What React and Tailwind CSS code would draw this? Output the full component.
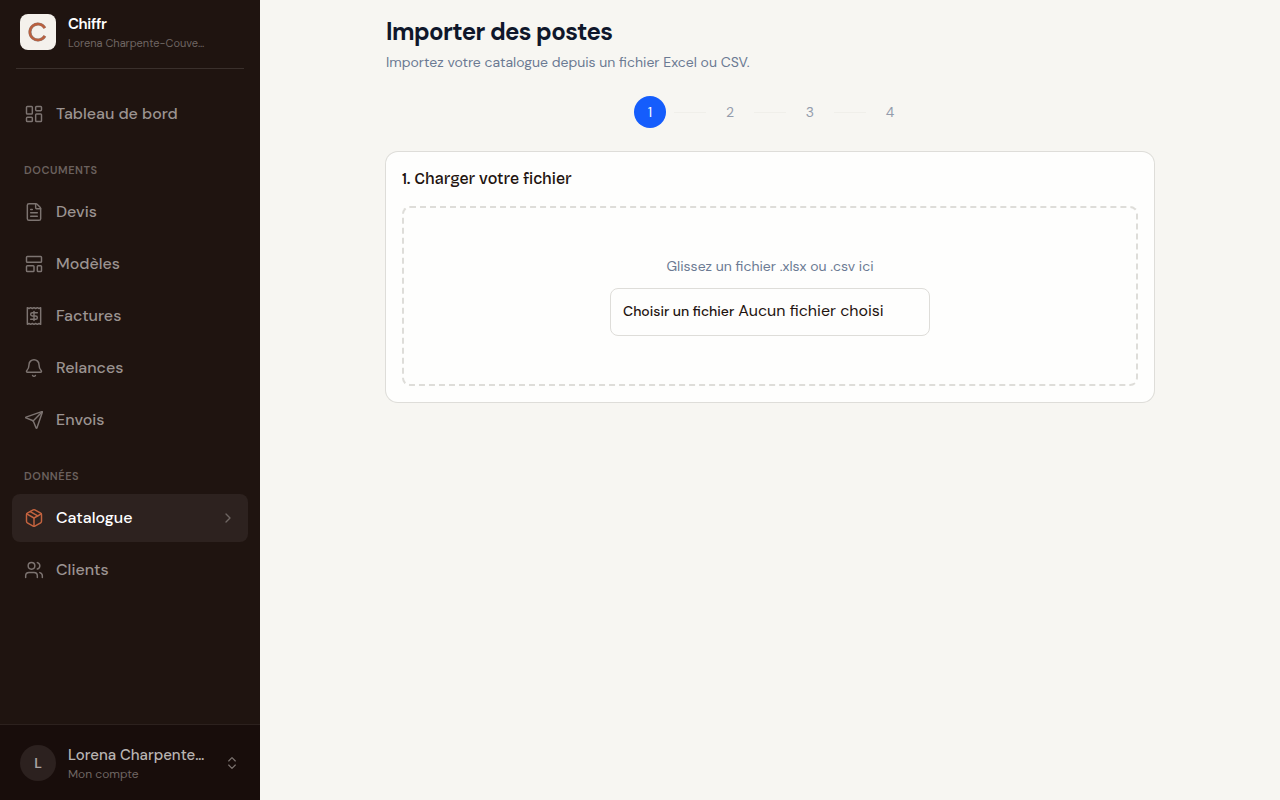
import {
    Bell,
    ChevronRight,
    ChevronsUpDown,
    FileText,
    LayoutDashboard,
    LayoutTemplate,
    Package,
    Receipt,
    Send,
    Users,
} from 'lucide-react';

const documents = [
    { label: 'Devis', icon: FileText },
    { label: 'Modèles', icon: LayoutTemplate },
    { label: 'Factures', icon: Receipt },
    { label: 'Relances', icon: Bell },
    { label: 'Envois', icon: Send },
];

const data = [
    { label: 'Catalogue', icon: Package, active: true },
    { label: 'Clients', icon: Users },
];

function NavItem({ label, icon: Icon, active }) {
    return (
        <a
            href="#"
            aria-current={active ? 'page' : undefined}
            className={
                active
                    ? 'flex h-12 items-center gap-3 rounded-lg bg-[#2d221f] px-3 text-base font-medium text-white'
                    : 'flex h-12 items-center gap-3 rounded-lg px-3 text-base font-medium text-[#9b9391]'
            }
        >
            <Icon size={20} strokeWidth={1.75} className={active ? 'text-[#c4633f]' : 'text-[#7d7471]'} />
            <span className="flex-1">{label}</span>
            {active && <ChevronRight size={16} strokeWidth={2} className="text-[#6f6663]" />}
        </a>
    );
}

function NavGroup({ title, items }) {
    return (
        <div className="mt-6">
            <h2 className="mb-2.5 px-3 text-[11px] leading-4 font-semibold tracking-wider text-[#6b615e] uppercase">{title}</h2>
            <div className="flex flex-col gap-1">
                {items.map((item) => (
                    <NavItem key={item.label} {...item} />
                ))}
            </div>
        </div>
    );
}

function Sidebar() {
    return (
        <aside className="flex w-[260px] shrink-0 flex-col bg-[#1f1410]">
            <div className="mx-4 flex items-start gap-3 border-b border-[#3a302c] px-1 pt-3.5 pb-4">
                <div className="flex size-9 shrink-0 items-center justify-center rounded-lg bg-[#f4f1ec]">
                    <svg viewBox="0 0 20 20" className="size-5" fill="none" aria-hidden="true">
                        <path d="M16.9 6A8 8 0 1 0 16.9 14" stroke="#8d8582" strokeWidth="3" />
                        <path d="M16.8 6.1A8 8 0 1 0 16.8 13.9" stroke="#b9603f" strokeWidth="2.3" />
                    </svg>
                </div>
                <div>
                    <div className="text-[15px] leading-5 font-semibold tracking-tight text-white">Chiffr</div>
                    <div className="text-[11px] leading-[18px] text-[#6f6663]">Lorena Charpente-Couve…</div>
                </div>
            </div>

            <nav className="flex-1 px-3 pt-[21px]">
                <NavItem label="Tableau de bord" icon={LayoutDashboard} />
                <NavGroup title="Documents" items={documents} />
                <NavGroup title="Données" items={data} />
            </nav>

            <button type="button" className="flex items-start gap-3 border-t border-[#2c211e] bg-[#180d0b] px-5 pt-5 pb-[17px] text-left">
                <span className="flex size-9 shrink-0 items-center justify-center rounded-full bg-[#2c211f] text-sm font-semibold text-[#aaa3a1]">L</span>
                <span className="flex-1">
                    <span className="block text-[15px] leading-5 font-medium text-[#b9b4b2]">Lorena Charpente…</span>
                    <span className="block text-xs leading-[18px] text-[#6f6663]">Mon compte</span>
                </span>
                <ChevronsUpDown size={16} strokeWidth={1.75} className="mt-2.5 shrink-0 text-[#7d7471]" />
            </button>
        </aside>
    );
}

function Stepper() {
    return (
        <ol className="mt-6 flex items-center justify-center gap-2 text-sm">
            {[1, 2, 3, 4].map((step) => (
                <li key={step} className="flex items-center gap-2">
                    <span
                        className={
                            step === 1
                                ? 'flex size-8 items-center justify-center rounded-full bg-[#155dfc] text-white'
                                : 'flex size-8 items-center justify-center rounded-full text-[#949cac]'
                        }
                    >
                        {step}
                    </span>
                    <span className={step < 4 ? 'h-px w-8 bg-[#f0efea]' : 'hidden'} />
                </li>
            ))}
        </ol>
    );
}

export default function App() {
    return (
        <div className="flex min-h-screen bg-[#f7f6f2] font-['DM_Sans',Inter,sans-serif]">
            <Sidebar />

            <main className="min-w-0 flex-1">
                <div className="mx-auto max-w-3xl pt-4">
                    <h1 className="text-2xl font-bold tracking-tight text-[#0f172b]">Importer des postes</h1>
                    <p className="mt-1 text-sm text-[#6b7a93]">Importez votre catalogue depuis un fichier Excel ou CSV.</p>

                    <Stepper />

                    <section className="mt-6 rounded-xl bg-[#fefefd] p-4 ring-1 ring-[#deddd9]">
                        <h2 className="font-['Bricolage_Grotesque','DM_Sans',sans-serif] text-base leading-[22px] font-medium text-[#1f1410]">
                            1. Charger votre fichier
                        </h2>
                        <div className="mt-4 flex flex-col items-center gap-3 rounded-lg border-2 border-dashed border-[#deddd9] py-12">
                            <p className="text-sm text-[#6b7a93]">Glissez un fichier .xlsx ou .csv ici</p>
                            <label className="relative flex h-12 w-80 cursor-pointer items-baseline gap-1 rounded-lg border border-[#deddd9] px-3 pt-2.5 text-[#1f1410]">
                                <input type="file" accept=".xlsx,.csv" className="sr-only" />
                                <span className="text-sm font-medium">Choisir un fichier</span>
                                <span className="text-base">Aucun fichier choisi</span>
                            </label>
                        </div>
                    </section>
                </div>
            </main>
        </div>
    );
}
